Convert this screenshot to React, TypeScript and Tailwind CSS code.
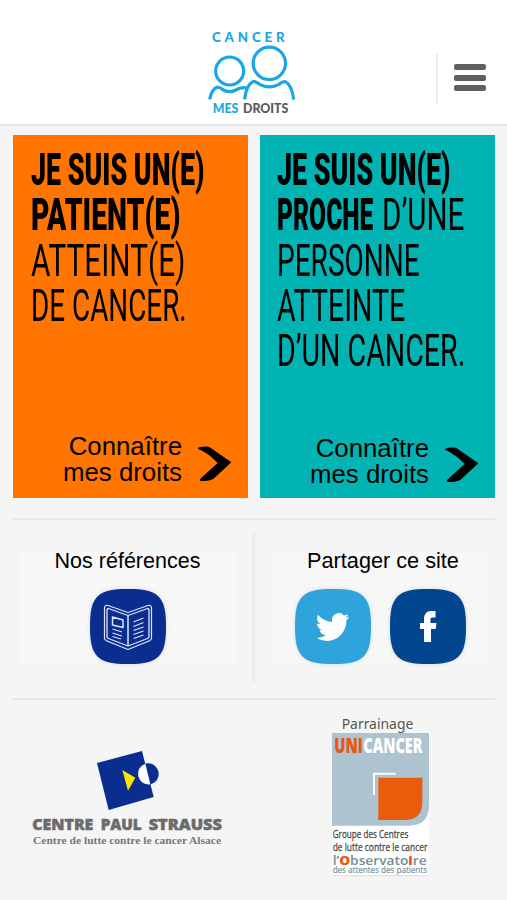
import type { ReactNode } from 'react'
import clsx from 'clsx'

type CardLine = {
  strong?: string
  strongScale?: string
  light?: string
  lightScale?: string
}

type Card = {
  bg: string
  headingClass: string
  linkClass: string
  chevronClass: string
  lines: CardLine[]
}

const CARDS: Card[] = [
  {
    bg: 'bg-[#ff7500]',
    headingClass: 'pl-[18px]',
    linkClass: 'pb-[13px]',
    chevronClass: 'mb-[3px]',
    lines: [
      { strong: 'JE SUIS UN(E)', strongScale: 'scale-x-[0.609]' },
      { strong: 'PATIENT(E)', strongScale: 'scale-x-[0.645]' },
      { light: 'ATTEINT(E)', lightScale: 'scale-x-[0.677]' },
      { light: 'DE CANCER.', lightScale: 'scale-x-[0.633]' },
    ],
  },
  {
    bg: 'bg-[#02b3b3]',
    headingClass: 'pl-[17px]',
    linkClass: 'pb-[11px]',
    chevronClass: 'mb-[4px]',
    lines: [
      { strong: 'JE SUIS UN(E)', strongScale: 'scale-x-[0.609]' },
      { strong: 'PROCHE', strongScale: 'scale-x-[0.56]', light: 'D’UNE', lightScale: 'scale-x-[0.672]' },
      { light: 'PERSONNE', lightScale: 'scale-x-[0.637]' },
      { light: 'ATTEINTE', lightScale: 'scale-x-[0.648]' },
      { light: 'D’UN CANCER.', lightScale: 'scale-x-[0.65]' },
    ],
  },
]

export default function App() {
  return (
    <div className="flex h-[900px] w-[507px] flex-col overflow-hidden bg-[#f5f5f5] font-['Liberation_Sans',sans-serif] text-black">
      <Header />

      <main className="flex flex-col px-[13px] pt-[9px]">
        {/* ── Profile cards ── */}
        <div className="grid h-[363px] grid-cols-[235px_235px] gap-3">
          {CARDS.map(card => (
            <ProfileCard key={card.bg} card={card} />
          ))}
        </div>

        <div className="mt-5 h-0.5 w-[482px] bg-[#e8e8e8]" />

        {/* ── References and sharing ── */}
        <div className="mt-[13px] flex h-[149px]">
          <Section title="Nos références" className="ml-[6px] w-[217px] text-[21.5px]">
            <Tile color="#0b2d8f">
              <BookIcon />
            </Tile>
          </Section>
          <div className="ml-[16px] w-[3px] bg-[#ebebeb]" />
          <Section title="Partager ce site" titleClass="ml-[5px]" className="ml-[17px] w-[217px] text-[21.7px]">
            <Tile color="#2fa3dc">
              <path
                fill="#fff"
                transform="translate(21.2 20.7) scale(1.4)"
                d="M23.6 4.9a9.7 9.7 0 0 1-2.8.8 4.9 4.9 0 0 0 2.1-2.7c-1 .6-2 1-3.1 1.2a4.9 4.9 0 0 0-8.4 4.5C7.3 8.5 3.7 6.6 1.3 3.6a4.9 4.9 0 0 0 1.5 6.6c-.8 0-1.6-.2-2.2-.6v.1c0 2.4 1.7 4.4 3.9 4.8a5 5 0 0 1-2.2.1 4.9 4.9 0 0 0 4.6 3.4A9.9 9.9 0 0 1 0 20.1a14 14 0 0 0 7.5 2.2c9.1 0 14-7.5 14-14v-.6a10 10 0 0 0 2.1-2.8z"
              />
            </Tile>
            <Tile color="#02468f">
              <path
                fill="#fff"
                d="M34 53V40h-4V34h4V30.5c0-5.5 2.5-8.5 7-8.5h4.5V28.5H42.5c-1.5 0-2 .8-2 2v3.5h6l-.8 6H41V53z"
              />
            </Tile>
          </Section>
        </div>

        <div className="mt-4 h-0.5 w-[482px] bg-[#e8e8e8]" />

        {/* ── Partners ── */}
        <div className="flex items-start">
          <StraussLogo />
          <UnicancerLogo />
        </div>
      </main>
    </div>
  )
}

function Header() {
  return (
    <header className="flex h-[126px] shrink-0 items-start border-b-2 border-[#e6e6e6] bg-white">
      <svg className="mt-5 ml-[190px]" width={130} height={104} viewBox="0 0 390 312">
        <g fill="none" stroke="#17a7e4" strokeWidth={9.5}>
          <circle cx={119} cy={153} r={42} />
          <circle cx={238} cy={130} r={48.5} />
          <path d="M59 238C62 222 69 206 82 201Q91 202 100 210Q119 220 138 210Q148 202 168 203" />
          <path d="M164 238C167 212 177 189 192 184Q200 186 209 193Q238 208 267 193Q278 184 286 185C302 193 308 216 311 239" />
        </g>
        <g fontFamily="Lato, sans-serif" fontWeight={900}>
          <text x={66} y={66} fontSize={40} fill="#17a7e4" textLength={218}>
            CANCER
          </text>
          <text x={68} y={278} fontSize={40} fill="#17a7e4" textLength={77} lengthAdjust="spacingAndGlyphs">
            MES
          </text>
          <text x={159} y={278} fontSize={40} fill="#5b5757" textLength={136} lengthAdjust="spacingAndGlyphs">
            DROITS
          </text>
        </g>
      </svg>
      <div className="mt-[54px] ml-[116px] h-[49px] w-0.5 bg-[#ececec]" />
      <div className="mt-16 ml-4 flex w-8 flex-col gap-[4.5px]">
        <span className="h-1.5 rounded-[2px] bg-[#606060]" />
        <span className="h-1.5 rounded-[2px] bg-[#606060]" />
        <span className="h-1.5 rounded-[2px] bg-[#606060]" />
      </div>
    </header>
  )
}

function ProfileCard({ card }: { card: Card }) {
  return (
    <a href="#" className={clsx('flex flex-col justify-between', card.bg)}>
      <h2
        className={clsx(
          "pt-[13px] font-['Roboto',sans-serif] text-[44px] leading-[45.3px] whitespace-nowrap",
          card.headingClass,
        )}
      >
        {card.lines.map((line, i) => (
          <span key={i} className="flex h-[45.3px]">
            {line.strong && (
              <span className={clsx('origin-left font-black', line.light && 'w-[105px]', line.strongScale)}>
                {line.strong}
              </span>
            )}
            {line.light && <span className={clsx('origin-left', line.lightScale)}>{line.light}</span>}
          </span>
        ))}
      </h2>
      <span className={clsx('flex items-end justify-end pr-4', card.linkClass)}>
        <span className="text-right text-[25.8px] leading-[26px]">
          Connaître
          <br />
          mes droits
        </span>
        <svg className={clsx('ml-4 h-9 w-[34px]', card.chevronClass)} viewBox="594 79 102 108">
          <path d="M594 84Q608 79 627 81L694 128L640 178Q622 187 600 183V178L653 130Q625 100 594 87z" />
        </svg>
      </span>
    </a>
  )
}

function Section({
  title,
  titleClass,
  className,
  children,
}: {
  title: string
  titleClass?: string
  className: string
  children: ReactNode
}) {
  return (
    <section className={clsx('mt-[18px] flex h-[114px] flex-col items-center bg-[#f7f7f7]', className)}>
      <h3 className={clsx('mt-[-3px] leading-[26px] whitespace-nowrap', titleClass)}>{title}</h3>
      <div className="mt-[15px] flex gap-[19px]">{children}</div>
    </section>
  )
}

function Tile({ color, children }: { color: string; children: ReactNode }) {
  return (
    <svg className="drop-shadow-[0_0_2px_rgba(0,0,0,0.12)]" width={76} height={75} viewBox="0 0 76 75">
      <path
        fill={color}
        d="M38 0C53 0 62.5 1.5 68.5 7.5C74.5 13.5 76 23 76 37.5C76 52 74.5 61.5 68.5 67.5C62.5 73.5 53 75 38 75C23 75 13.5 73.5 7.5 67.5C1.5 61.5 0 52 0 37.5C0 23 1.5 13.5 7.5 7.5C13.5 1.5 23 0 38 0z"
      />
      {children}
    </svg>
  )
}

function BookIcon() {
  return (
    <g fill="none" stroke="#dbe5fa" strokeLinejoin="round">
      <path strokeWidth={1.2} d="M38 23.5L18 16.5Q14.5 16 14.5 19V49Q14.5 51 17 52L38 60.5L59 52Q61.5 51 61.5 49V19Q61.5 16 58 16.5z" />
      <path strokeWidth={1.3} d="M38 26.5L18.500 19.500Q17 19.500 17 21V47.500Q17 49 18.500 49.500L38 57L57.500 49.500Q59 49 59 47.500V21Q59 19.500 57.500 19.500z" />
      <path strokeWidth={1.5} d="M38 26.5V57" />
      <path strokeWidth={1.5} d="M22.5 28L33 31V38.5L22.5 36z" />
      <path
        strokeWidth={1.3}
        d="M22.5 40L32 43M22.5 44L32 47M22.5 47.5L31 50M43.5 33L53.5 29M43.5 37.5L53.5 33.5M43.5 41.5L53.5 38M43.5 45.5L53.5 42M43.5 49.5L53.5 46"
      />
    </g>
  )
}

function StraussLogo() {
  return (
    <svg className="mt-10 ml-[7px]" width={220} height={120} viewBox="0 0 660 360">
      <path fill="#0b2d8f" d="M231 69L366 33L401 171L266 210z" />
      <path fill="#ffe400" d="M307 90L346 113L324 152z" />
      <circle cx={384} cy={102} r={32} fill="#0b2d8f" />
      <path fill="#fff" d="M376 71A32 32 0 0 0 391 133z" />
      <g fontFamily="'Open Sans', sans-serif" fontWeight={800} fontSize={45} fill="#6b6b6b" stroke="#6b6b6b" strokeWidth={1.5}>
        <text x={37} y={270} textLength={183} lengthAdjust="spacingAndGlyphs">
          CENTRE
        </text>
        <text x={242} y={270} textLength={123} lengthAdjust="spacingAndGlyphs">
          PAUL
        </text>
        <text x={386} y={270} textLength={220} lengthAdjust="spacingAndGlyphs">
          STRAUSS
        </text>
      </g>
      <text
        x={39}
        y={311}
        fontFamily="'Liberation Serif', serif"
        fontWeight={700}
        fontSize={31}
        fill="#777"
        textLength={564}
        lengthAdjust="spacingAndGlyphs"
      >
        Centre de lutte contre le cancer Alsace
      </text>
    </svg>
  )
}

function UnicancerLogo() {
  return (
    <svg className="mt-[5px] ml-[75px] overflow-visible" width={130} height={180} viewBox="0 0 390 540">
      <text
        x={80}
        y={72}
        fontFamily="'Noto Sans', sans-serif"
        fontSize={43}
        fill="#555"
        textLength={215}
        lengthAdjust="spacingAndGlyphs"
      >
        Parrainage
      </text>
      <path fill="#fff" d="M51 300H342V512H51z" />
      <path fill="#aec3d0" d="M51 84H342V300Q342 362 282 362H51z" />
      <path fill="#eb5b0c" d="M190 218H322V290Q322 345 268 345H190z" />
      <path fill="none" stroke="#fff" strokeWidth={6} d="M177 269V206H242" />
      <g fontFamily="'Open Sans', sans-serif">
        <g fontWeight={800} fontSize={65}>
          <text x={58} y={143} fill="#e8560f" textLength={86} lengthAdjust="spacingAndGlyphs">
            UNI
          </text>
          <text x={145} y={143} fill="#fff" textLength={178} lengthAdjust="spacingAndGlyphs">
            CANCER
          </text>
        </g>
        <g fontSize={34} fill="#444" stroke="#444" strokeWidth={0.8}>
          <text x={53} y={399} textLength={227} lengthAdjust="spacingAndGlyphs">
            Groupe des Centres
          </text>
          <text x={53} y={437} textLength={284} lengthAdjust="spacingAndGlyphs">
            de lutte contre le cancer
          </text>
        </g>
        <text x={53} y={481} fontSize={35} fontWeight={600} fill="#6f9096" textLength={282} lengthAdjust="spacingAndGlyphs">
          l’<tspan fill="#e8560f" fontWeight={800}>O</tspan>bservato<tspan fill="#e8560f" fontWeight={800}>i</tspan>re
        </text>
        <text x={53} y={505} fontSize={29} fill="#6f9096" stroke="#6f9096" strokeWidth={0.5} textLength={283} lengthAdjust="spacingAndGlyphs">
          des attentes des patients
        </text>
      </g>
      <path stroke="#f0c3ad" strokeWidth={2} d="M53 512H342" />
    </svg>
  )
}
